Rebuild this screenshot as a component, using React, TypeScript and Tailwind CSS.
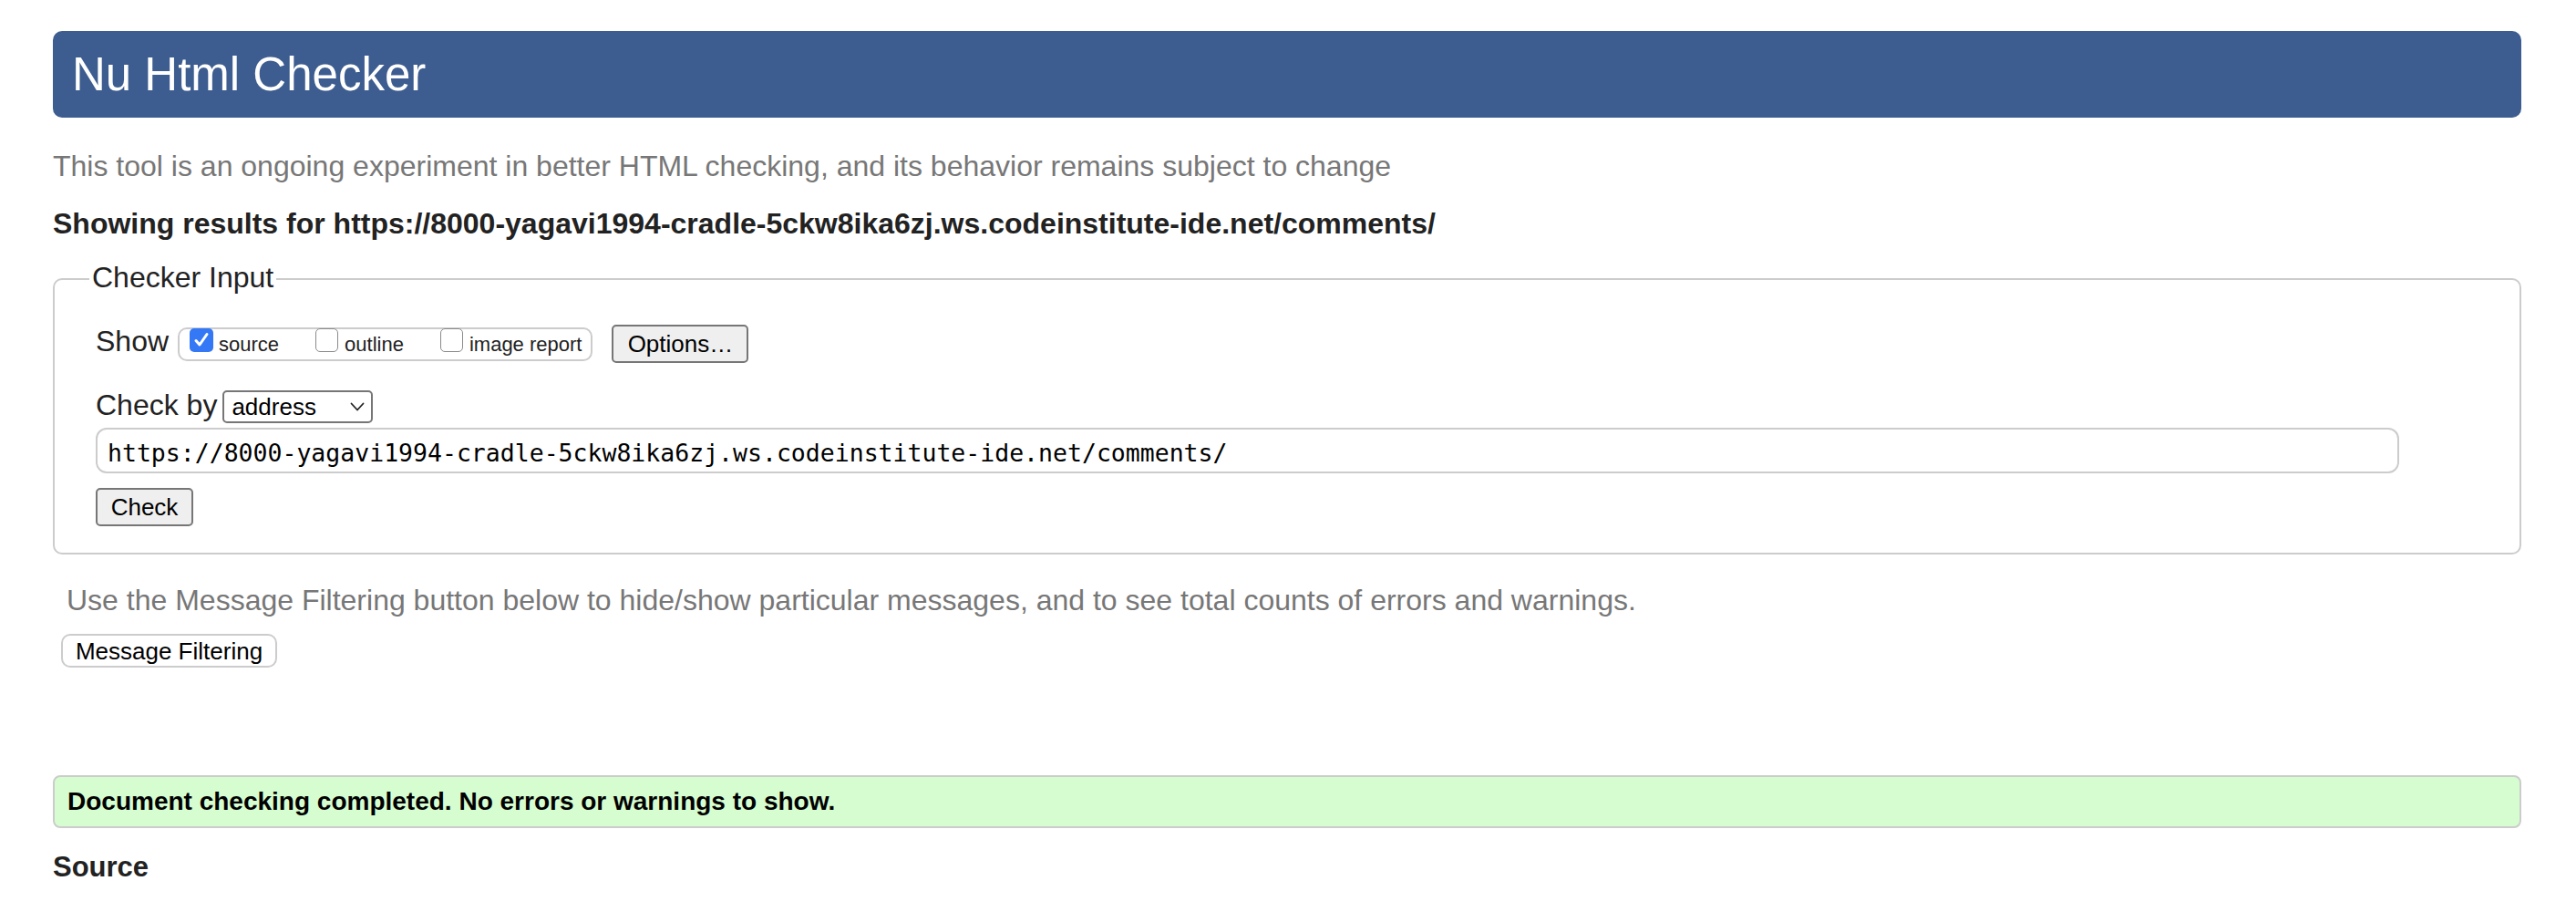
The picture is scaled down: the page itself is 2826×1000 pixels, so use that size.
import React from "react";

function CheckBox({ checked }: { checked?: boolean }) {
  if (checked) {
    return (
      <span className="-mt-[1px] flex h-[26px] w-[26px] shrink-0 items-center justify-center rounded-[5px] bg-[#3478f6]">
        <svg width="20" height="20" viewBox="0 0 20 20" fill="none">
          <polyline points="4,10.5 8,15 16,3.5" stroke="#ffffff" strokeWidth="3" strokeLinecap="round" strokeLinejoin="round" />
        </svg>
      </span>
    );
  }
  return <span className="-mt-[1px] block h-[26px] w-[25px] shrink-0 rounded-[5px] border-[1.5px] border-[#8a8a8a] bg-white" />;
}

export default function App() {
  const url = "https://8000-yagavi1994-cradle-5ckw8ika6zj.ws.codeinstitute-ide.net/comments/";
  return (
    <div className="min-h-screen bg-white pl-[58px] pr-[60px] pt-[34px] font-['Liberation_Sans',Arial,Helvetica,sans-serif] text-[#222]">
      <div className="flex h-[95px] items-center rounded-[10px] bg-[#3d5c8f] pl-[21px]">
        <h1 className="text-[51px] font-normal leading-[51px] text-white">Nu Html Checker</h1>
      </div>

      <p className="mt-[37px] text-[32px] leading-[32px] text-[#777]">
        This tool is an ongoing experiment in better HTML checking, and its behavior remains subject to change
      </p>

      <p className="mt-[31px] text-[32px] font-bold leading-[32px] text-[#222]">
        Showing results for {url}
      </p>

      <fieldset className="mt-[27px] min-w-0 rounded-[10px] border-2 border-[#cccccc] pb-[29px] pl-[45px] pr-0 pt-[32px]">
        <legend className="-ml-[7px] px-[3px] pb-[4px] text-[32px] leading-[32px] text-[#222]">Checker Input</legend>

        <div className="flex h-[42px] items-start">
          <span className="mt-[2px] text-[32px] leading-[32px]">Show</span>
          <div className="ml-[10px] mt-[3px] flex h-[37px] items-start rounded-[10px] border-2 border-[#cccccc] pl-[11px] pr-[10px]">
            <CheckBox checked />
            <span className="ml-[6px] mt-[6px] text-[22px] leading-[22px]">source</span>
            <span className="ml-[40px]"><CheckBox /></span>
            <span className="ml-[7px] mt-[6px] text-[22px] leading-[22px]">outline</span>
            <span className="ml-[40px]"><CheckBox /></span>
            <span className="ml-[7px] mt-[6px] text-[22px] leading-[22px]">image report</span>
          </div>
          <button className="ml-[21px] flex h-[42px] w-[150px] items-center justify-center rounded-[5px] border-2 border-[#767676] bg-[#efefef] text-[26px] leading-[26px] text-black">
            Options…
          </button>
        </div>

        <div className="mt-[30px] flex h-[36px] items-start">
          <span className="text-[32px] leading-[32px]">Check by</span>
          <div className="ml-[6px] flex h-[36px] w-[165px] items-center justify-between rounded-[5px] border-2 border-[#767676] bg-white pl-[8px] pr-[7px]">
            <span className="text-[26px] leading-[26px] text-black">address</span>
            <svg width="16" height="10" viewBox="0 0 16 10" fill="none">
              <polyline points="1.5,1.5 8,8.5 14.5,1.5" stroke="#222" strokeWidth="1.8" strokeLinecap="round" strokeLinejoin="round" />
            </svg>
          </div>
        </div>

        <input
          readOnly
          value={url}
          className="mt-[5px] block h-[50px] w-[2527px] rounded-[12px] border-2 border-[#cccccc] bg-white pl-[11px] pt-[4px] font-['DejaVu_Sans_Mono',monospace] text-[26.5px] text-black outline-none"
        />

        <button className="mt-[16px] flex h-[42px] w-[107px] items-center justify-center rounded-[5px] border-2 border-[#767676] bg-[#efefef] text-[26px] leading-[26px] text-black">
          Check
        </button>
      </fieldset>

      <p className="ml-[15px] mt-[34px] text-[32px] leading-[32px] text-[#777]">
        Use the Message Filtering button below to hide/show particular messages, and to see total counts of errors and warnings.
      </p>

      <button className="ml-[9px] mt-[21px] flex h-[37px] w-[237px] items-center justify-center rounded-[10px] border-2 border-[#cccccc] bg-white text-[26px] leading-[26px] text-black">
        Message Filtering
      </button>

      <div className="mt-[118px] flex h-[58px] items-center rounded-[8px] border-2 border-[#cccccc] bg-[#d6fdd0] pl-[14px]">
        <span className="text-[28px] font-bold leading-[28px] text-black">
          Document checking completed. No errors or warnings to show.
        </span>
      </div>

      <h2 className="mt-[27px] text-[31px] font-bold leading-[31px] text-[#222]">Source</h2>
    </div>
  );
}
